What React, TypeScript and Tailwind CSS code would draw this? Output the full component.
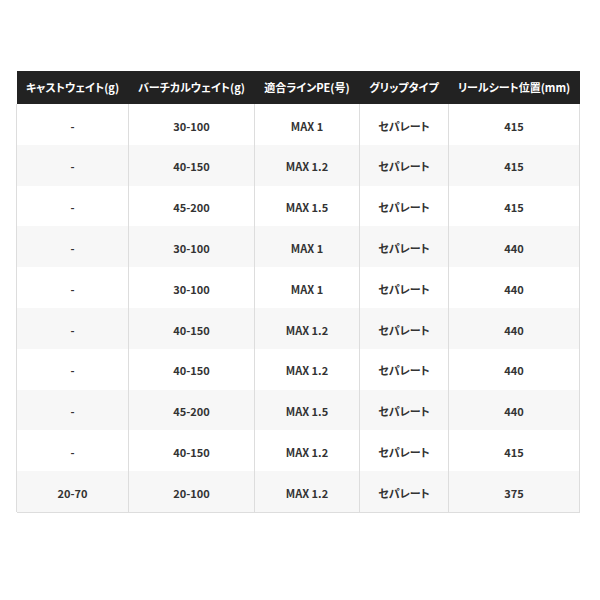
const headers = ['キャストウェイト(g)', 'バーチカルウェイト(g)', '適合ラインPE(号)', 'グリップタイプ', 'リールシート位置(mm)'];

const rows = [
  ['-', '30-100', 'MAX 1', 'セパレート', '415'],
  ['-', '40-150', 'MAX 1.2', 'セパレート', '415'],
  ['-', '45-200', 'MAX 1.5', 'セパレート', '415'],
  ['-', '30-100', 'MAX 1', 'セパレート', '440'],
  ['-', '30-100', 'MAX 1', 'セパレート', '440'],
  ['-', '40-150', 'MAX 1.2', 'セパレート', '440'],
  ['-', '40-150', 'MAX 1.2', 'セパレート', '440'],
  ['-', '45-200', 'MAX 1.5', 'セパレート', '440'],
  ['-', '40-150', 'MAX 1.2', 'セパレート', '415'],
  ['20-70', '20-100', 'MAX 1.2', 'セパレート', '375'],
];

const widths = ['w-[112px]', 'w-[126px]', 'w-[105px]', 'w-[89px]', 'w-[131px]'];

export default function App() {
  return (
    <div
      className="w-[600px] h-[600px] bg-white pt-[71px] px-4"
      style={{ fontFamily: '"Noto Sans CJK JP", "Noto Sans", sans-serif' }}
    >
      <table className="border-collapse table-fixed w-[563px] text-[11px] font-bold text-[#333] [font-feature-settings:'palt']">
        <thead>
          <tr className="bg-[#222222] text-white h-[33px]">
            {headers.map((h, i) => (
              <th key={h} className={`${widths[i]} p-0 text-center font-bold`}>
                {h}
              </th>
            ))}
          </tr>
        </thead>
        <tbody>
          {rows.map((r, ri) => (
            <tr key={ri} className={`h-[40.8px] ${ri % 2 === 1 ? 'bg-[#f7f7f7]' : 'bg-white'}`}>
              {r.map((c, ci) => (
                <td key={ci} className="p-0 pt-[3px] text-center border-x border-[#dddddd]">
                  {c}
                </td>
              ))}
            </tr>
          ))}
          <tr className="h-0">
            <td colSpan={5} className="p-0 border-b border-[#dddddd]" />
          </tr>
        </tbody>
      </table>
    </div>
  );
}
